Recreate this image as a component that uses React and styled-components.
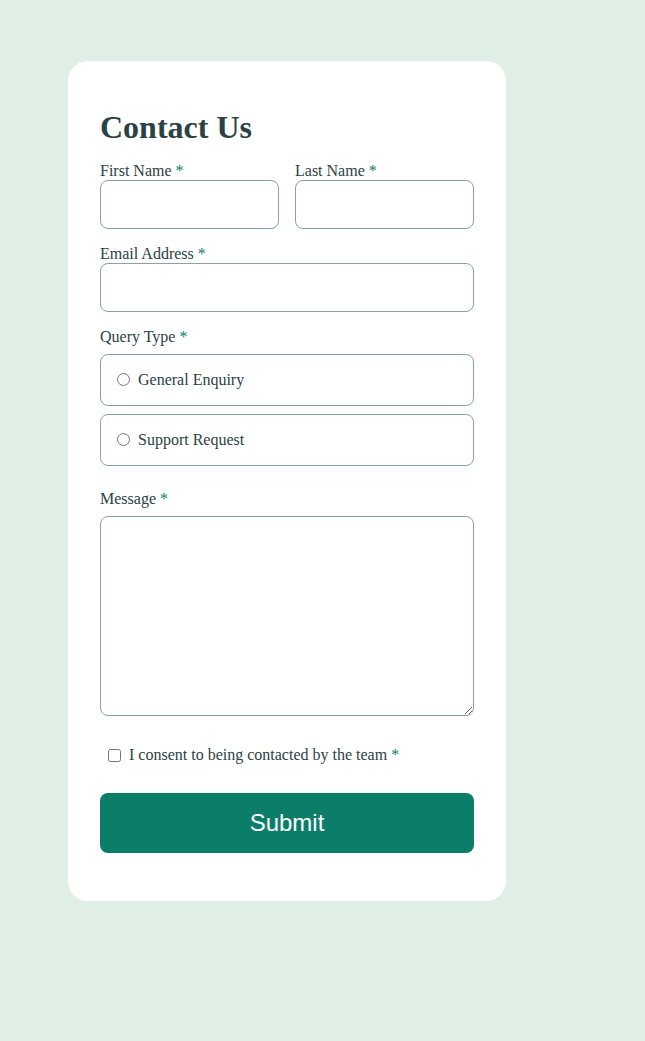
import React from "react";
import styled, { createGlobalStyle } from "styled-components";

const GlobalStyle = createGlobalStyle`
  body {
    margin: 0;
    background-color: #dfefe5;
    font-family: "Liberation Serif", "Times New Roman", serif;
    color: #2a4244;
  }
`;

const Page = styled.div`
  min-height: 1041px;
  padding: 61px 0 0 68px;
  box-sizing: border-box;
`;

const Card = styled.form`
  width: 438px;
  box-sizing: border-box;
  background: #ffffff;
  border-radius: 20px;
  padding: 48px 32px;
  display: flex;
  flex-direction: column;
`;

const Title = styled.h1`
  margin: 0 0 17px;
  font-size: 32px;
  font-weight: bold;
  line-height: 36px;
  color: #2a4244;
`;

const Row = styled.div`
  display: flex;
  gap: 16px;
`;

const Field = styled.div`
  flex: 1;
  display: flex;
  flex-direction: column;
  gap: ${(p) => p.gap || 0}px;
  margin-top: ${(p) => p.top || 0}px;
`;

const Label = styled.label`
  font-size: 16px;
  line-height: 18px;
  color: #2a4244;
`;

const Star = styled.span`
  color: #0c7d69;
  margin-left: 4px;
`;

const Input = styled.input`
  height: 49px;
  box-sizing: border-box;
  border: 1px solid #87a3a6;
  border-radius: 8px;
  padding: 0 12px;
  font-family: inherit;
  font-size: 16px;
  width: 100%;
`;

const Options = styled.div`
  display: flex;
  flex-direction: column;
  gap: 8px;
`;

const Option = styled.label`
  height: 52px;
  box-sizing: border-box;
  border: 1px solid #87a3a6;
  border-radius: 8px;
  padding: 0 0 0 12px;
  display: flex;
  align-items: center;
  font-size: 16px;
  color: #2a4244;
`;

const Radio = styled.input`
  width: 13px;
  height: 13px;
  margin: -2px 8px 0 4px;
`;

const Message = styled.textarea`
  height: 200px;
  box-sizing: border-box;
  border: 1px solid #87a3a6;
  border-radius: 8px;
  padding: 12px;
  font-family: inherit;
  font-size: 16px;
  width: 100%;
  resize: vertical;
`;

const Consent = styled.label`
  display: flex;
  align-items: center;
  margin: 30px 0 0 8px;
  font-size: 16px;
  line-height: 18px;
  color: #2a4244;
`;

const Check = styled.input`
  width: 13px;
  height: 13px;
  margin: 0 8px 0 0;
`;

const Submit = styled.button`
  margin-top: 29px;
  height: 60px;
  border: none;
  border-radius: 8px;
  background: #0c7d69;
  color: #ffffff;
  font-family: "Liberation Sans", Arial, sans-serif;
  font-size: 24px;
  cursor: pointer;
`;

export default function App() {
  return (
    <Page>
      <GlobalStyle />
      <Card onSubmit={(e) => e.preventDefault()}>
        <Title>Contact Us</Title>
        <Row>
          <Field>
            <Label>
              First Name<Star>*</Star>
            </Label>
            <Input type="text" />
          </Field>
          <Field>
            <Label>
              Last Name<Star>*</Star>
            </Label>
            <Input type="text" />
          </Field>
        </Row>
        <Field top={16}>
          <Label>
            Email Address<Star>*</Star>
          </Label>
          <Input type="email" />
        </Field>
        <Field top={16} gap={8}>
          <Label>
            Query Type<Star>*</Star>
          </Label>
          <Options>
            <Option>
              <Radio type="radio" name="query" />
              General Enquiry
            </Option>
            <Option>
              <Radio type="radio" name="query" />
              Support Request
            </Option>
          </Options>
        </Field>
        <Field top={24} gap={8}>
          <Label>
            Message<Star>*</Star>
          </Label>
          <Message />
        </Field>
        <Consent>
          <Check type="checkbox" />
          I consent to being contacted by the team<Star>*</Star>
        </Consent>
        <Submit type="submit">Submit</Submit>
      </Card>
    </Page>
  );
}
